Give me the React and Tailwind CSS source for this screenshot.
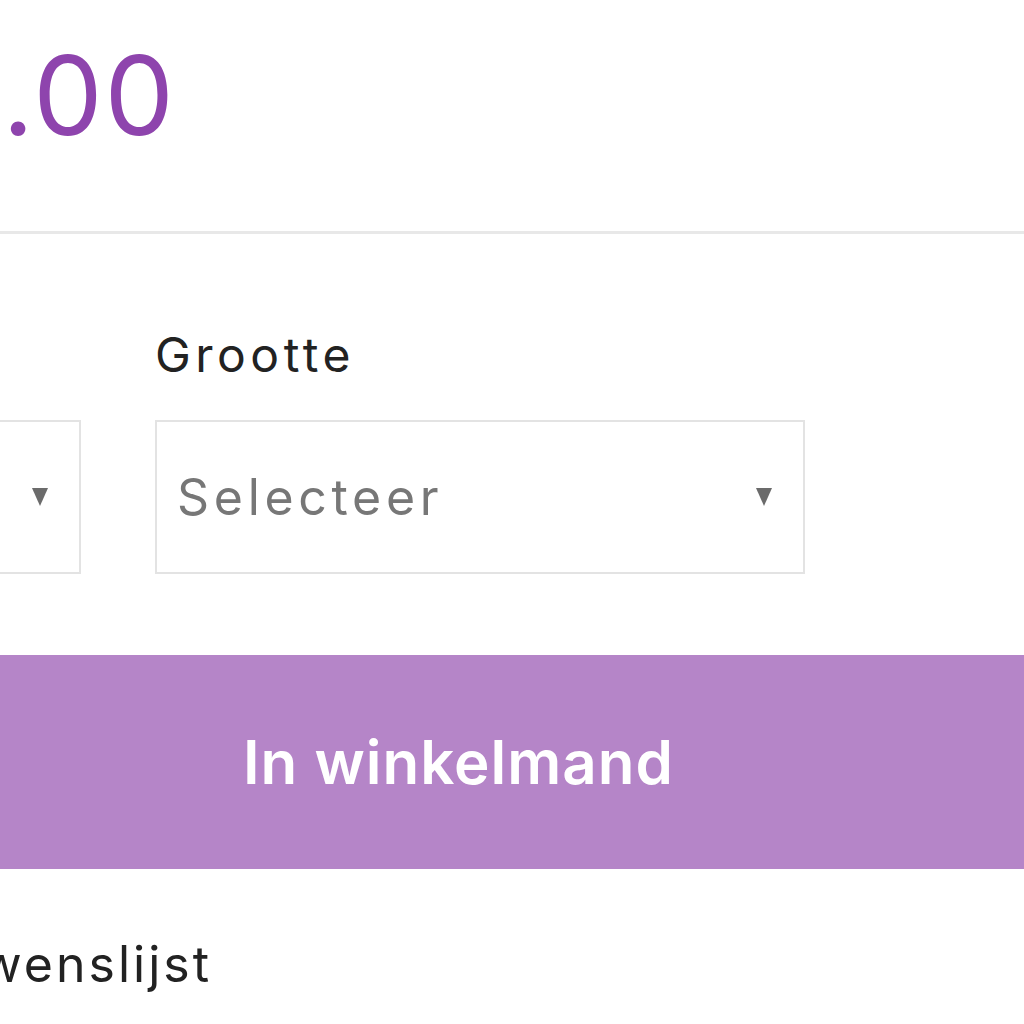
import React from 'react';

const Arrow = () => (
  <svg width="18" height="22" viewBox="0 0 18 22" className="shrink-0">
    <path d="M1 2 H17 L9 20 Z" fill="#6b6b6b" />
  </svg>
);

const SelectBox = ({ label, placeholder }) => (
  <div className="w-[650px] shrink-0 flex flex-col">
    <div className="text-[48px] leading-none text-[#222] h-[48px] tracking-[4.5px]">{label}</div>
    <div className="mt-[41px] h-[154px] border-2 border-[#e3e3e3] flex items-center justify-between pl-[20px] pr-[30px]">
      <span className="text-[50px] text-[#777] leading-none tracking-[4.7px]">{placeholder}</span>
      <Arrow />
    </div>
  </div>
);

export default function App() {
  return (
    <div className="w-[1024px] h-[1024px] overflow-hidden bg-white font-['Inter',sans-serif]">
      {/* Price */}
      <div className="h-[231px] pt-[40px]">
        <div className="w-[176px] flex justify-end">
          <span className="text-[110px] leading-none text-[#8e44ad] whitespace-nowrap tracking-[2px]">
            € 5.00
          </span>
        </div>
      </div>
      <div className="h-[3px] bg-[#e8e8e8]" />

      {/* Options */}
      <div className="pt-[97px] flex gap-[74px] -ml-[569px]">
        <SelectBox label="Kleur" placeholder="Selecteer" />
        <SelectBox label="Grootte" placeholder="Selecteer" />
      </div>

      {/* Add to cart */}
      <button className="mt-[81px] w-full h-[214px] bg-[#b585c8] text-white text-[60px] font-semibold tracking-[1px] flex items-center pl-[243px]">
        In winkelmand
      </button>

      {/* Wishlist */}
      <div className="mt-[70px] w-[212px] flex justify-end">
        <span className="text-[50px] text-[#222] whitespace-nowrap leading-none tracking-[3px]">
          Toevoegen aan wenslijst
        </span>
      </div>
    </div>
  );
}
